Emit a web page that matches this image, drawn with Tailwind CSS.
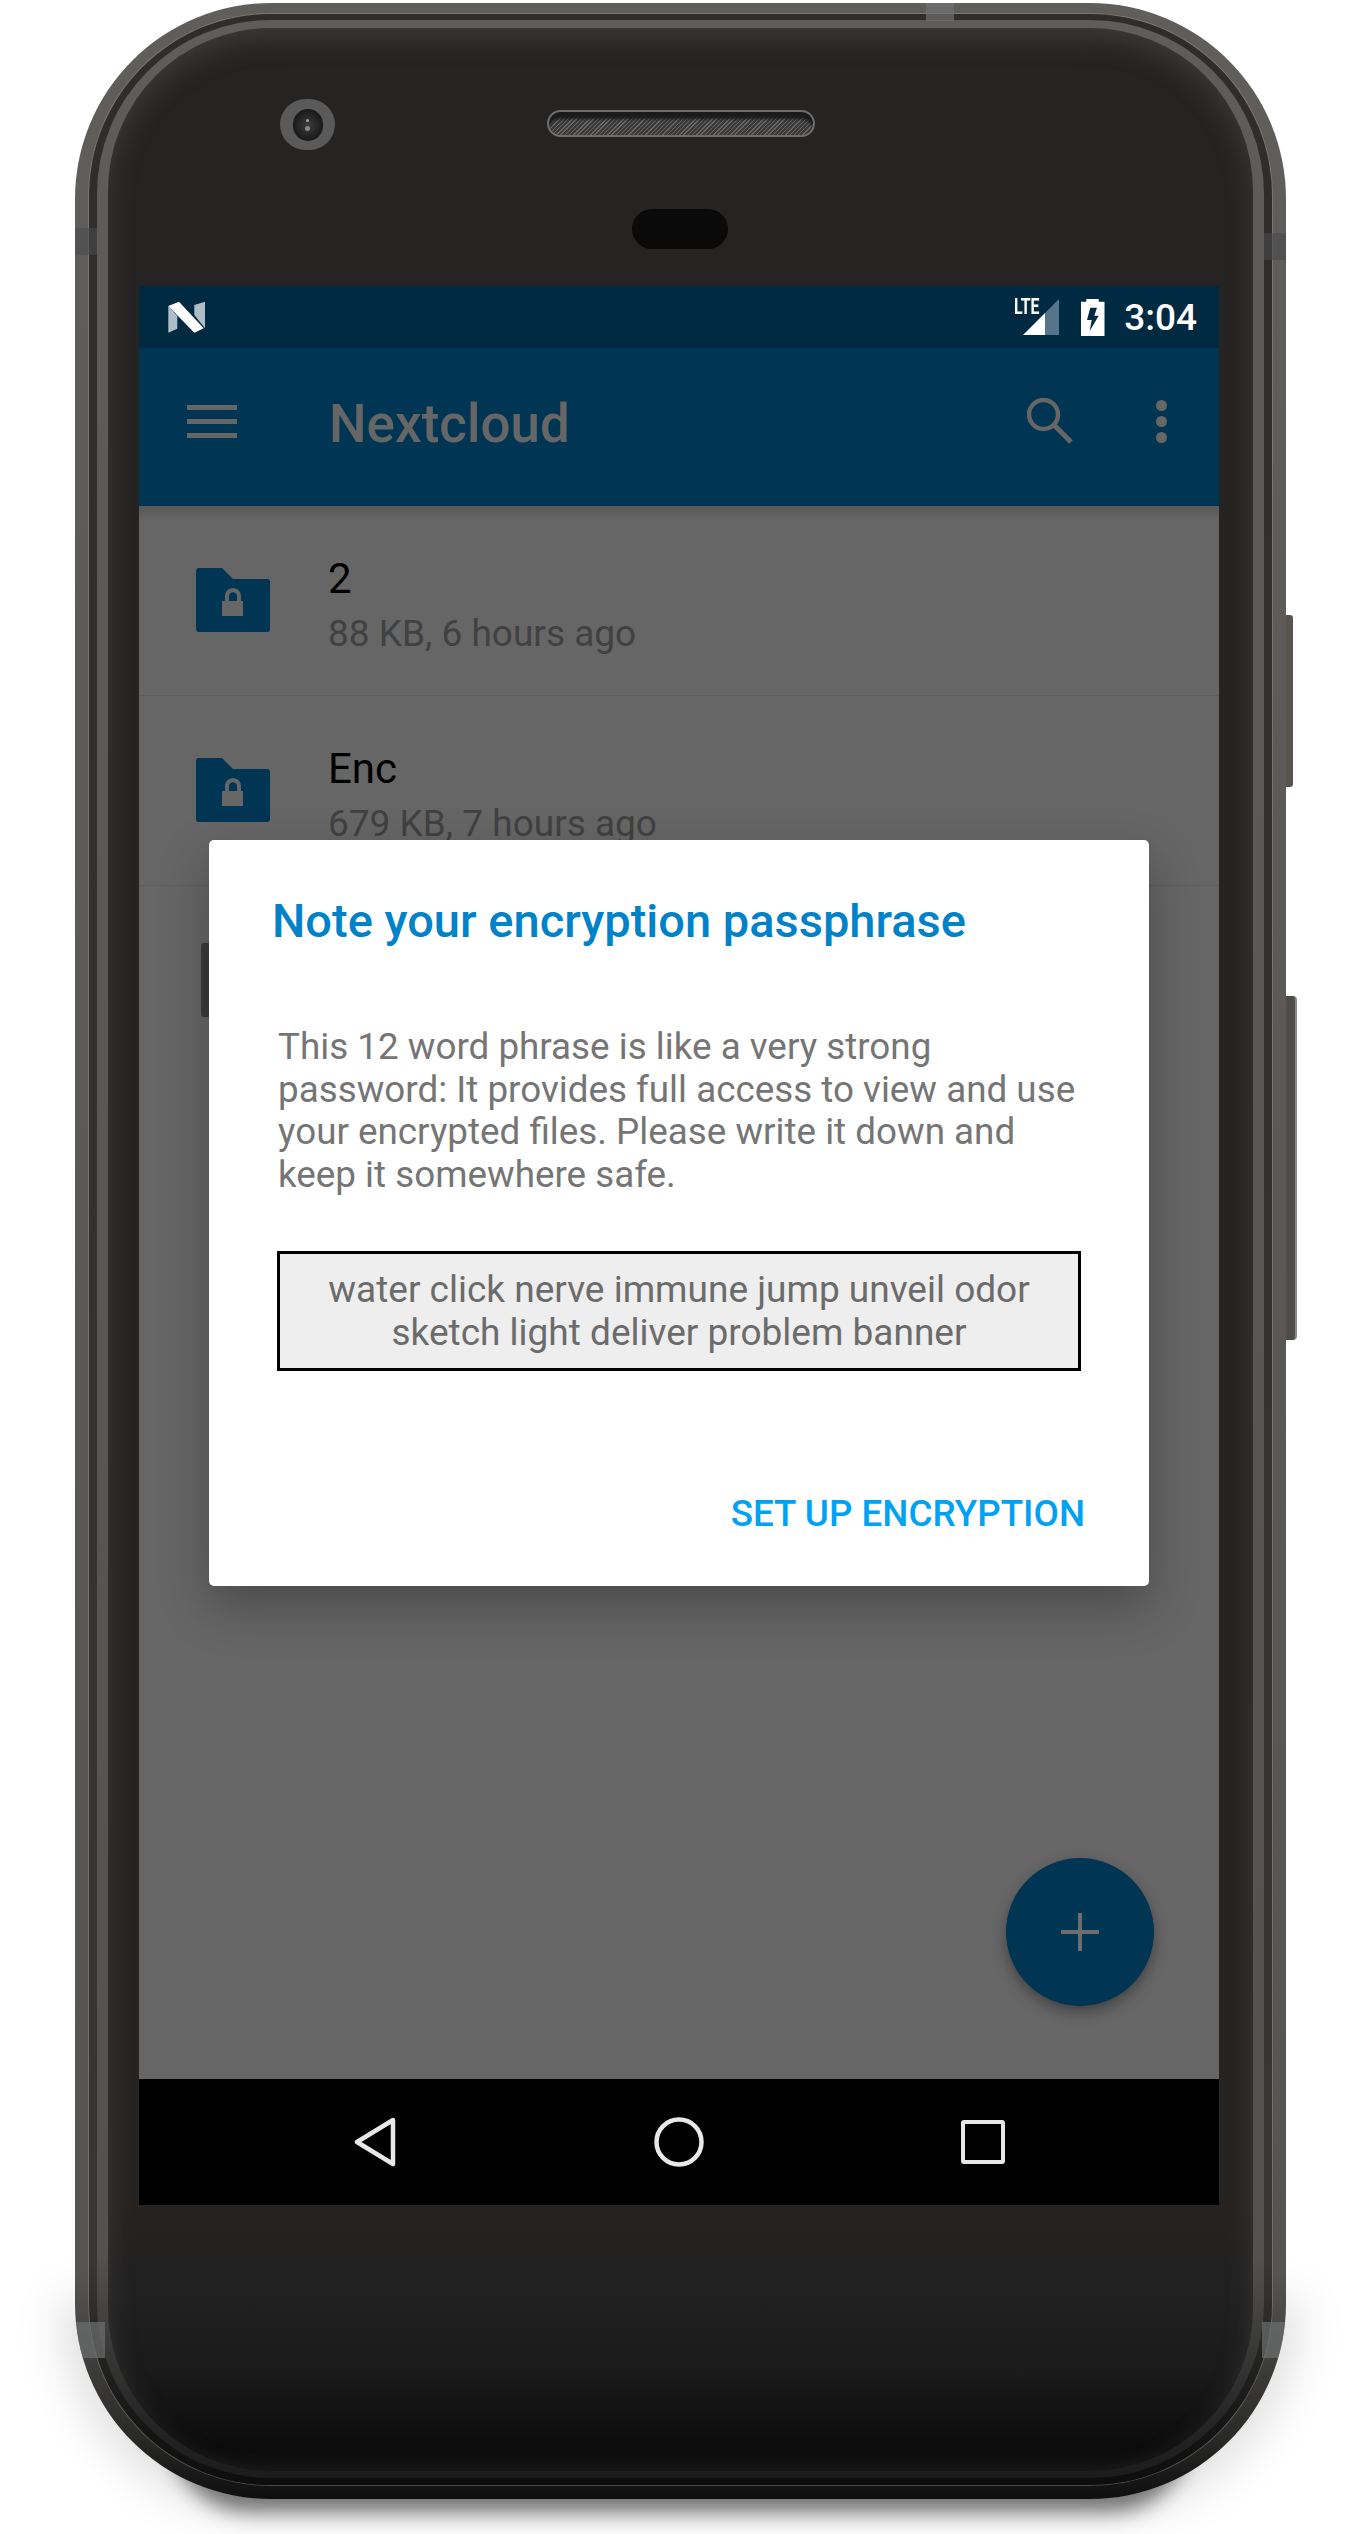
<!DOCTYPE html>
<html lang="en">
<head>
<meta charset="UTF-8">
<title>Nextcloud encryption passphrase</title>
<script src="https://cdn.jsdelivr.net/npm/@tailwindcss/browser@4"></script>
</head>
<body class="bg-white font-['Roboto',sans-serif] overflow-hidden">
<div class="relative w-[1370px] h-[2534px]">
  <!-- floor shadow -->
  <div class="absolute left-[170px] w-[1020px] top-[2420px] h-[92px] rounded-b-[80px] bg-black/50 blur-[10px]"></div>
  <div class="absolute left-[60px] w-[1240px] top-[2300px] h-[215px] rounded-b-[210px] bg-black/12 blur-[22px]"></div>

  <!-- side buttons -->
  <div class="absolute left-[1280px] top-[615px] w-[13px] h-[172px] rounded-r-[3px] bg-[#56544f]"></div>
  <div class="absolute left-[1280px] top-[996px] w-[17px] h-[344px] rounded-r-[4px] border-r-2 border-[#8a8a88] bg-[#4f4d4a]"></div>

  <!-- phone body -->
  <div class="absolute left-[75px] top-[3px] w-[1211px] h-[2496px] rounded-[196px] overflow-hidden bg-[linear-gradient(to_bottom,#5f5e5b_0%,#565451_91%,#2a2a29_97.500%,#0e0e0e_100%)] px-[14px] pt-[11px] pb-[14px]">
    <div class="h-full rounded-[182px] bg-[linear-gradient(to_bottom,#2f2d2c_0%,#383634_91%,#161616_97.500%,#0d0d0d_100%)] shadow-[0_0_0_1px_rgba(170,170,168,0.35)] px-[8px] pt-[6px] pb-[7px]">
      <div class="h-full rounded-[174px] bg-[linear-gradient(to_bottom,#5e5d5b_0%,#535250_91%,#262626_97.500%,#1c1c1c_100%)] px-[11px] pt-[8px] pb-[7px]">
        <!-- face -->
        <div class="relative h-full rounded-[163px] bg-[linear-gradient(to_bottom,#252423_0%,#252423_89%,#212020_93%,#1a1a1a_96%,#0c0c0c_99%,#111_100%)] shadow-[inset_0_10px_26px_rgba(95,93,90,0.4)] pl-[31px] pr-[34px] pt-[258px]">
          <!-- camera -->
          <div class="absolute left-[172px] top-[71px] w-[55px] h-[51px] rounded-full bg-[#5a5a5a] flex items-center justify-center">
            <div class="w-[30px] h-[32px] rounded-full bg-[radial-gradient(circle,#3c3c3c_0%,#121212_85%)] flex flex-col items-center justify-center gap-[4px]">
              <div class="w-[3px] h-[3px] rounded-full bg-[#a0a0a0]"></div>
              <div class="w-[5px] h-[5px] rounded-full bg-[#8a8a8a]"></div>
            </div>
          </div>
          <!-- earpiece -->
          <div class="absolute left-[439px] top-[82px] w-[268px] h-[27px] rounded-full border-2 border-[#6d6d6d] bg-[repeating-linear-gradient(135deg,#686868_0px,#686868_1px,#3a3a3a_1px,#3a3a3a_3px)] shadow-[inset_0_7px_3px_#1b1b1b]"></div>
          <!-- proximity pill -->
          <div class="absolute left-[524px] top-[181px] w-[96px] h-[40px] rounded-full bg-[#0a0a0b]"></div>

          <!-- screen -->
          <div class="relative w-[1080px] h-[1919px] flex flex-col overflow-hidden">
            <!-- status bar -->
            <div class="h-[62px] shrink-0 bg-[#002942] flex items-center pl-[28px] pr-[22px] text-white">
              <svg width="40" height="33" viewBox="0 0 40 33">
                <path d="M1.300 5 L10.300 15 L10.300 27.700 L1.300 31.700Z" fill="#aebdc7"/>
                <path d="M27.300 4 L38 0.700 L38 27.300 L27.300 14Z" fill="#aebdc7"/>
                <path d="M1.300 5 L12 0.700 L36.700 27.300 L27.300 31.700Z" fill="#fff"/>
              </svg>
              <div class="ml-auto flex items-center">
                <div class="relative w-[46px] h-[38px] mr-[21px]">
                  <svg width="46" height="38" viewBox="0 0 46 38">
                    <path d="M9 37 L31 15 L31 37Z" fill="#fff"/>
                    <path d="M31 15 L45 1 L45 37 L31 37Z" fill="#57758a"/>
                  </svg>
                  <span class="absolute left-0 -top-[1px] origin-left scale-x-[0.72] text-[22px] leading-[20px] font-bold text-white">LTE</span>
                </div>
                <svg width="24" height="37" viewBox="0 0 24 37" class="mr-[19px]">
                  <path d="M5.300 2.700V0H17.700V2.700H23.500V37H0V2.700z M9.300 8.700 L6 21 H10.700 L8.700 32 L17.700 16.700 H13.300 L16 8.700z" fill="#fff" fill-rule="evenodd"/>
                </svg>
                <span class="text-[37px] font-medium leading-none">3:04</span>
              </div>
            </div>
            <!-- app bar -->
            <div class="h-[158px] shrink-0 bg-[#003553] flex items-center pl-[48px] pb-[12px] relative z-10">
              <div class="w-[50px] flex flex-col gap-[9px]">
                <div class="h-[5px] bg-[#666]"></div>
                <div class="h-[5px] bg-[#666]"></div>
                <div class="h-[5px] bg-[#666]"></div>
              </div>
              <span class="ml-[92px] mt-[6px] text-[53px] font-medium leading-none text-[#666]">Nextcloud</span>
              <svg width="46" height="46" viewBox="0 0 46 46" class="ml-auto">
                <circle cx="16.500" cy="16.500" r="14.500" fill="none" stroke="#666" stroke-width="4.500"/>
                <path d="M27 27 L44 44" stroke="#666" stroke-width="5" fill="none"/>
              </svg>
              <div class="ml-[83px] mr-[52px] flex flex-col gap-[5px]">
                <div class="w-[11px] h-[11px] rounded-full bg-[#666]"></div>
                <div class="w-[11px] h-[11px] rounded-full bg-[#666]"></div>
                <div class="w-[11px] h-[11px] rounded-full bg-[#666]"></div>
              </div>
            </div>
            <!-- list (dimmed) -->
            <div class="relative flex-1 bg-[#666]">
              <div class="absolute inset-x-0 top-0 h-[14px] bg-linear-to-b from-black/15 to-transparent"></div>
              <div class="h-[190px] border-b border-[#5e5e5e] flex pl-[57px]">
                <svg width="74" height="64" viewBox="0 0 74 64" class="mt-[62px]">
                  <path d="M3 0h23l11 11h34q3 0 3 3v47q0 3-3 3H3q-3 0-3-3V3q0-3 3-3z" fill="#003553"/>
                  <path d="M26 48V33h3v-5c0-10.500 16-10.500 16 0v5h2v15z M33 33h8v-5c0-5-8-5-8 0z" fill="#666" fill-rule="evenodd"/>
                </svg>
                <div class="ml-[58px]">
                  <div class="mt-[48px] text-[42px] leading-[50px] text-black">2</div>
                  <div class="mt-[8px] text-[37px] leading-[44px] text-[#414141]">88 KB, 6 hours ago</div>
                </div>
              </div>
              <div class="h-[190px] border-b border-[#5e5e5e] flex pl-[57px]">
                <svg width="74" height="64" viewBox="0 0 74 64" class="mt-[62px]">
                  <path d="M3 0h23l11 11h34q3 0 3 3v47q0 3-3 3H3q-3 0-3-3V3q0-3 3-3z" fill="#003553"/>
                  <path d="M26 48V33h3v-5c0-10.500 16-10.500 16 0v5h2v15z M33 33h8v-5c0-5-8-5-8 0z" fill="#666" fill-rule="evenodd"/>
                </svg>
                <div class="ml-[58px]">
                  <div class="mt-[48px] text-[42px] leading-[50px] text-black">Enc</div>
                  <div class="mt-[8px] text-[37px] leading-[44px] text-[#414141]">679 KB, 7 hours ago</div>
                </div>
              </div>
              <!-- third row thumbnail, mostly behind the dialog -->
              <div class="ml-[62px] mt-[57px] w-[60px] h-[74px] rounded-[3px] bg-[#3b3b3b]"></div>

              <!-- FAB -->
              <div class="absolute left-[867px] top-[1352px] w-[148px] h-[148px] rounded-full bg-[#003553] shadow-[0_6px_14px_rgba(0,0,0,0.35)] flex items-center justify-center">
                <svg width="38" height="38" viewBox="0 0 38 38">
                  <path d="M17 0h4v17h17v4H21v17h-4V21H0v-4h17z" fill="#6e6e6e"/>
                </svg>
              </div>

              <!-- dialog -->
              <div class="absolute left-[70px] top-[334px] w-[940px] h-[746px] rounded-[5px] bg-white shadow-[0_20px_50px_rgba(0,0,0,0.28)] flex flex-col pl-[63px] pr-[64px]">
                <h2 class="mt-[54px] text-[47px] leading-[54px] font-medium text-[#0082c9] whitespace-nowrap">Note your encryption passphrase</h2>
                <p class="mt-[78px] ml-[6px] text-[36.800px] leading-[42.500px] text-[#757575]">This 12 word phrase is like a very strong password: It provides full access to view and use your encrypted files. Please write it down and keep it somewhere safe.</p>
                <div class="mt-[55px] ml-[5px] w-[804px] h-[120px] border-[3px] border-black bg-[#eee] flex items-center justify-center text-center text-[37px] leading-[43px] text-[#6b6b6b] px-[20px]">water click nerve immune jump unveil odor sketch light deliver problem banner</div>
                <div class="mt-[122px] ml-auto text-[36.800px] leading-[42px] font-medium text-[#00a2f5] whitespace-nowrap">SET UP ENCRYPTION</div>
              </div>
            </div>
            <!-- nav bar -->
            <div class="h-[126px] shrink-0 bg-black flex items-center">
              <svg width="42" height="50" viewBox="0 0 42 50" class="ml-[215px]">
                <path d="M39 3 L3 25 L39 47Z" fill="none" stroke="#e8e8e8" stroke-width="4.500" stroke-linejoin="round"/>
              </svg>
              <svg width="50" height="50" viewBox="0 0 50 50" class="ml-[258px]">
                <circle cx="25" cy="25" r="22.500" fill="none" stroke="#e8e8e8" stroke-width="4.500"/>
              </svg>
              <div class="ml-[257px] w-[44px] h-[44px] rounded-[3px] border-[4px] border-[#e8e8e8]"></div>
            </div>
          </div>
        </div>
      </div>
    </div>
    <!-- antenna breaks on the metal rim -->
    <div class="absolute left-0 top-[225px] w-[22px] h-[27px] bg-[#4a4b4c]/60"></div>
    <div class="absolute right-0 top-[230px] w-[22px] h-[27px] bg-[#47494a]/60"></div>
    <div class="absolute left-[851px] top-0 w-[28px] h-[18px] bg-[#6f7071]/70"></div>
    <div class="absolute left-0 top-[2319px] w-[30px] h-[36px] bg-[#6e6f70]/70"></div>
    <div class="absolute right-0 top-[2319px] w-[24px] h-[36px] bg-[#6e6f70]/70"></div>
  </div>
</div>
</body>
</html>
